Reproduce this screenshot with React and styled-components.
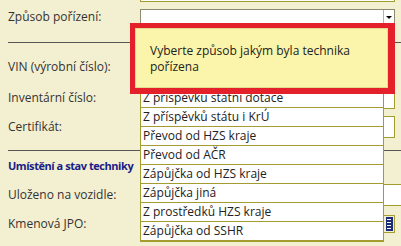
import React from 'react';
import styled, { createGlobalStyle } from 'styled-components';

const acquisitionOptions = [
  'Nákup',
  'Dar',
  'Bezúplatný převod',
  'Z příspěvku státní dotace',
  'Z příspěvků státu i KrÚ',
  'Převod od HZS kraje',
  'Převod od AČR',
  'Zápůjčka od HZS kraje',
  'Zápůjčka jiná',
  'Z prostředků HZS kraje',
  'Zápůjčka od SSHR',
];

function App() {
  return (
    <Page>
      <GlobalStyle />
      <Form>
        <Row height={23} first>
          <span />
          <Input />
        </Row>
        <Row height={30}>
          <Label>Způsob pořízení:</Label>
          <Select>
            <SelectArrow />
          </Select>
        </Row>
        <Separator top={10} bottom={9} />
        <Row height={30}>
          <Label>VIN (výrobní číslo):</Label>
          <Input />
        </Row>
        <Row height={32}>
          <Label>Inventární číslo:</Label>
          <Input />
        </Row>
        <Row height={26}>
          <Label>Certifikát:</Label>
          <Input />
        </Row>
        <Separator top={10} bottom={0} />
        <Heading>Umístění a stav techniky</Heading>
        <Row height={28}>
          <Label>Uloženo na vozidle:</Label>
          <Input wide />
        </Row>
        <Row height={30}>
          <Label>Kmenová JPO:</Label>
          <Field>
            <Input />
            <PickerButton>
              <svg width="7" height="14" viewBox="0 0 7 14">
                <rect x="0" y="0" width="7" height="14" fill="#1c2a7a" />
                <rect x="1" y="2" width="4" height="1" fill="#fff" />
                <rect x="1" y="5" width="4" height="1" fill="#fff" />
                <rect x="1" y="8" width="4" height="1" fill="#fff" />
                <rect x="1" y="11" width="4" height="1" fill="#fff" />
              </svg>
            </PickerButton>
          </Field>
        </Row>
      </Form>

      <OptionList>
        {acquisitionOptions.map((option) => (
          <Option key={option}>{option}</Option>
        ))}
      </OptionList>

      <Highlight>
        <Tooltip>Vyberte způsob jakým byla technika pořízena</Tooltip>
      </Highlight>
    </Page>
  );
}

const GlobalStyle = createGlobalStyle`
  html, body {
    margin: 0;
    padding: 0;
    background: #f3efd1;
  }
  body {
    font-family: "Open Sans", "Noto Sans", sans-serif;
    font-size: 12px;
    color: #333;
  }
`;

const Page = styled.div`
  position: relative;
  width: 401px;
  height: 246px;
  overflow: hidden;
  background: #f3efd1;
`;

const Form = styled.div`
  display: flex;
  flex-direction: column;
  width: 420px;
  padding-left: 8px;
`;

const Row = styled.div`
  display: grid;
  grid-template-columns: 132px 255px;
  align-items: center;
  height: ${(p) => p.height}px;
  margin-top: ${(p) => (p.first ? '-21px' : '0')};
`;

const Label = styled.span`
  white-space: nowrap;
  line-height: 16px;
`;

const Input = styled.div`
  box-sizing: border-box;
  height: 22px;
  width: ${(p) => (p.wide ? '280px' : '100%')};
  background: #fff;
  border: 1px solid #a59c31;
`;

const Select = styled.div`
  position: relative;
  box-sizing: border-box;
  height: 16px;
  background: #fff;
  border: 1px solid #8c8a70;
`;

const SelectArrow = styled.span`
  position: absolute;
  top: 0;
  right: 0;
  bottom: 0;
  width: 10px;
  border-left: 1px solid #b8b59a;
  &::after {
    content: '';
    position: absolute;
    left: 2px;
    top: 6px;
    border-left: 3px solid transparent;
    border-right: 3px solid transparent;
    border-top: 3px solid #000;
  }
`;

const Separator = styled.div`
  height: 1px;
  margin: ${(p) => p.top}px 0 ${(p) => p.bottom}px;
  background: #555;
`;

const Heading = styled.div`
  height: 30px;
  line-height: 30px;
  font-size: 11px;
  letter-spacing: -0.45px;
  font-weight: bold;
  color: #1b1b86;
  white-space: nowrap;
`;

const Field = styled.div`
  display: flex;
  align-items: center;
`;

const PickerButton = styled.div`
  box-sizing: border-box;
  flex: 0 0 12px;
  height: 18px;
  margin-left: -1px;
  display: flex;
  align-items: center;
  justify-content: center;
  border: 1px solid #a59c31;
  background: #f3efd1;
`;

const OptionList = styled.div`
  position: absolute;
  left: 140px;
  top: 32px;
  width: 244px;
  box-sizing: border-box;
  background: #fff;
  border: 1px solid #a59c31;
  border-top: none;
  border-bottom-width: 2px;
`;

const Option = styled.div`
  height: 18px;
  line-height: 18px;
  padding-left: 2px;
  color: #222;
  white-space: nowrap;
  border-bottom: 1px solid #a59c31;
  &:last-child {
    border-bottom: none;
  }
`;

const Highlight = styled.div`
  position: absolute;
  left: 130px;
  top: 23px;
  width: 265px;
  height: 71px;
  box-sizing: border-box;
  border-style: solid;
  border-color: #e4202a;
  border-width: 5px 7px 6px 5px;
  display: flex;
`;

const Tooltip = styled.div`
  flex: 1;
  box-sizing: border-box;
  padding: 14px 15px 0 14px;
  line-height: 16px;
  color: #222;
  background: #faf5ab;
  border: 1px solid #e2da93;
`;

export default App;
